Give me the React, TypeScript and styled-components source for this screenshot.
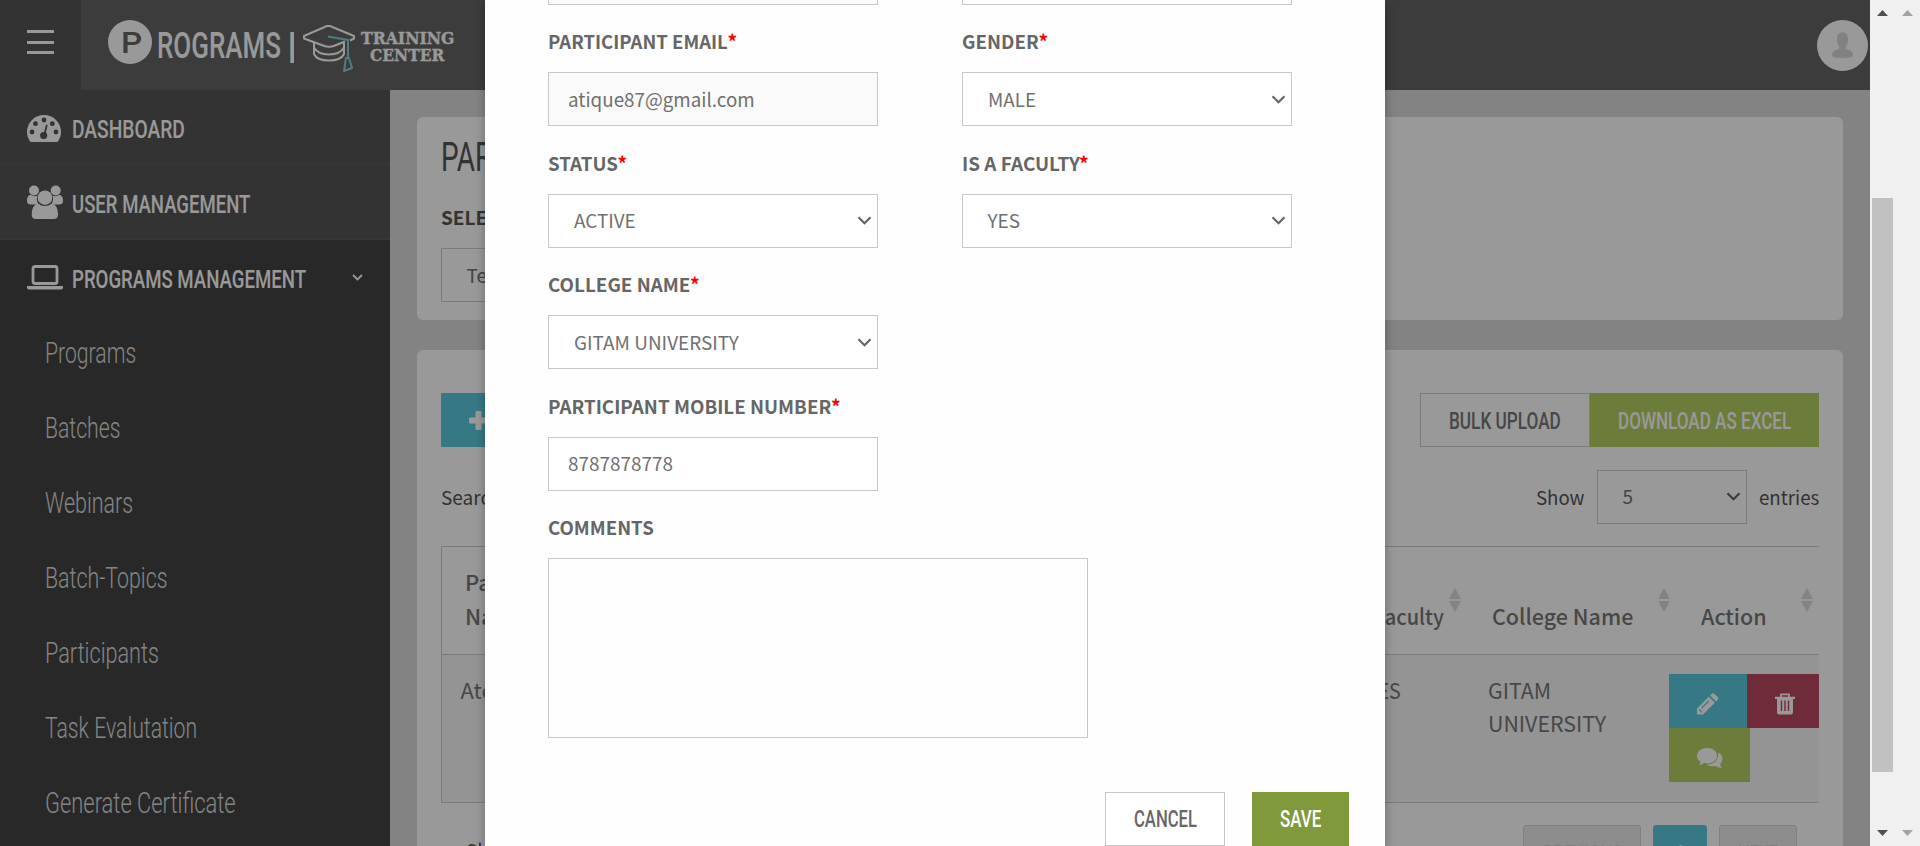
import React, { useLayoutEffect, useRef, useState } from 'react';
import styled, { createGlobalStyle } from 'styled-components';

const sans = `"Noto Sans CJK SC", "Noto Sans", sans-serif`;
const display = `Roboto, "Liberation Sans", sans-serif`;

const Global = createGlobalStyle`
  * { box-sizing: border-box; }
  html, body { margin: 0; height: 846px; overflow: hidden; }
  body { font-family: ${sans}; font-size: 19px; line-height: 27px; color: #555; background: #f1f1f1; }
`;

/* ---------- text fitted to the condensed width of the type design ---------- */
const FitBox = styled.span<{ $w: number }>`
  display: inline-block;
  width: ${p => p.$w}px;
  white-space: nowrap;
  text-align: left;
  flex: none;
`;
const FitInner = styled.span`
  display: inline-block;
  transform-origin: 0 50%;
`;
function Fit({ w, children }: { w: number; children: React.ReactNode }) {
  const ref = useRef<HTMLSpanElement>(null);
  const [scale, setScale] = useState(1);
  useLayoutEffect(() => {
    if (ref.current) setScale(w / ref.current.offsetWidth);
  }, [w]);
  return (
    <FitBox $w={w}>
      <FitInner ref={ref} style={{ transform: `scaleX(${scale})` }}>{children}</FitInner>
    </FitBox>
  );
}

/* ---------- page ---------- */
const Screen = styled.div`
  position: relative;
  width: 1920px;
  height: 846px;
  overflow: hidden;
  display: flex;
`;
const Page = styled.div`
  width: 1870px;
  height: 846px;
  overflow: hidden;
  display: flex;
  flex-direction: column;
  background: #dadadd;
`;
const Header = styled.header`
  height: 90px;
  flex: none;
  display: flex;
  background: #656565;
`;
const MenuButton = styled.div`
  width: 81px;
  background: #555;
  padding: 30px 27px 0;
  display: flex;
  flex-direction: column;
  gap: 7.5px;
`;
const MenuBar = styled.i`
  height: 3px;
  background: #fff;
`;
const Brand = styled.div`
  display: flex;
  align-items: flex-start;
  padding: 20px 0 0 27px;
  color: #fff;
  font-family: ${display};
  flex: 1;
`;
const BrandMark = styled.div`
  width: 44px;
  height: 44px;
  border-radius: 50%;
  background: #fff;
  color: #656565;
  font-size: 30px;
  font-weight: 500;
  line-height: 45px;
  padding-left: 12.5px;
`;
const BrandName = styled.div`
  margin-left: 5px;
  font-size: 36px;
  font-weight: 500;
  line-height: 52px;
`;
const BrandRule = styled.i`
  width: 4px;
  height: 31px;
  margin: 12px 9px 0 9px;
  background: #fff;
  border-left: 1px solid #a5dbe4;
`;
const CapIcon = styled.svg`
  display: block;
  margin-top: 3px;
  flex: none;
`;
const BrandTag = styled.div`
  margin: 10px 0 0 4px;
  width: 94px;
  display: flex;
  flex-direction: column;
  align-items: center;
  font: bold 16.5px/17px "DejaVu Serif", serif;
  -webkit-text-stroke: 0.3px #fff;
`;
const Avatar = styled.div`
  width: 51px;
  height: 51px;
  margin: 20px 2px 0 0;
  border-radius: 50%;
  background: #fff;
`;
const Body = styled.div`
  flex: 1;
  display: flex;
  min-height: 0;
`;
const Sidebar = styled.nav`
  width: 390px;
  flex: none;
  background: #444;
`;
const NavItem = styled.div<{ $open?: boolean }>`
  height: 75px;
  display: flex;
  align-items: center;
  padding: 0 27px;
  background: ${p => (p.$open ? '#444' : '#555')};
  border-bottom: ${p => (p.$open ? '0' : '1px solid #5e5e5e')};
  color: #fff;
`;
const NavText = styled.span<{ $top?: number }>`
  padding-top: ${p => p.$top ?? 4}px;
  font: 500 26.5px/40px ${display};
`;
const NavIcon = styled.span<{ $drop?: number }>`
  width: 45px;
  height: 38px;
  display: flex;
  align-items: center;
  padding-top: ${p => p.$drop ?? 0}px;
`;
const NavCaret = styled.svg`
  margin-left: auto;
`;
const NavChild = styled.div`
  height: 75px;
  padding: 0 0 0 45px;
  color: #ddd;
  font: 300 30px/75px ${display};
`;
const Main = styled.main`
  flex: 1;
  padding: 27px 27px 0;
  display: flex;
  flex-direction: column;
  gap: 30px;
`;
const Card = styled.section<{ $h: number }>`
  height: ${p => p.$h}px;
  flex: none;
  background: #fff;
  border-radius: 6px;
  padding: 0 24px;
`;
const Title = styled.h1`
  margin: 0;
  padding-top: 15px;
  height: 86px;
  font: 400 40.5px/50px ${display};
  color: #555;
`;
const Label = styled.div<{ $dark?: boolean }>`
  font-weight: 700;
  color: ${p => (p.$dark ? '#555' : '#666')};
  display: flex;
`;
const CardLabel = styled(Label)`
  height: 45px;
`;
const Control = styled.div<{ $w: number; $inset?: number; $muted?: boolean; $line?: string }>`
  width: ${p => p.$w}px;
  height: 54px;
  flex: none;
  border: 1px solid ${p => p.$line || '#c8c8c8'};
  background: ${p => (p.$muted ? '#fafafa' : '#fff')};
  display: flex;
  align-items: center;
  padding: 0 5.5px 2px ${p => p.$inset ?? 24.5}px;
  color: #707070;
`;
const SelectArrow = styled.svg`
  margin: 3px 0 0 auto;
  flex: none;
`;
const TopActions = styled.div`
  display: flex;
  padding-top: 43px;
`;
const Button = styled.div<{ $w: number; $bg?: string; $fg?: string; $line?: string }>`
  width: ${p => p.$w}px;
  height: 54px;
  flex: none;
  display: flex;
  align-items: center;
  justify-content: center;
  background: ${p => p.$bg || '#fff'};
  color: ${p => p.$fg || '#fff'};
  border: ${p => (p.$line ? `1px solid ${p.$line}` : '0')};
  padding-top: 1.5px;
  font: 500 23.5px/54px ${display};
`;
const AddButton = styled(Button)`
  justify-content: flex-start;
  padding: 0 0 0 28px;
`;
const IconButton = styled(Button)`
  justify-content: flex-start;
  padding: 5px 0 0 28px;
`;
const Spacer = styled.i`
  flex: 1;
`;
const Filters = styled.div`
  height: 99px;
  display: flex;
  align-items: center;
  gap: 12px;
`;
const Table = styled.div`
  border: 1px solid #cdcdcd;
  border-right: 0;
  height: 257px;
`;
const HeadRow = styled.div`
  height: 108px;
  border-bottom: 1px solid #cdcdcd;
  display: flex;
  align-items: flex-end;
  padding-bottom: 22.5px;
  font-size: 22px;
  line-height: 34px;
  font-weight: 500;
  color: #777;
`;
const HeadCell = styled.div<{ $w: number; $pad: number }>`
  width: ${p => p.$w}px;
  padding-left: ${p => p.$pad}px;
  display: flex;
  align-items: flex-end;
`;
const SortIcon = styled.svg`
  margin: 0 6px 20px auto;
`;
const DataRow = styled.div`
  height: 147px;
  background: #f7f7f7;
  display: flex;
  padding-top: 19px;
  font-size: 22px;
  line-height: 33px;
  color: #777;
`;
const DataCell = styled.div<{ $w: number; $pad: number }>`
  width: ${p => p.$w}px;
  padding: 0 0 0 ${p => p.$pad}px;
  margin-top: -1px;
`;
const RowActions = styled.div`
  width: 150px;
  display: flex;
  flex-wrap: wrap;
  align-content: flex-start;
`;
const Pager = styled.div`
  display: flex;
  padding: 22px 22px 0 25px;
  gap: 12px;
  line-height: 49px;
`;
const PageButton = styled.div<{ $w: number; $active?: boolean }>`
  width: ${p => p.$w}px;
  height: 60px;
  flex: none;
  border-radius: 3px;
  border: 1px solid ${p => (p.$active ? '#5acadc' : '#d6d6d6')};
  background: ${p => (p.$active ? '#5acadc' : '#ebebeb')};
  color: ${p => (p.$active ? '#fff' : '#d0d0d0')};
  text-align: center;
  font: 400 22px/56px ${display};
`;

/* ---------- modal ---------- */
const Backdrop = styled.div`
  position: absolute;
  inset: 0 50px 0 0;
  background: rgba(0, 0, 0, 0.4);
`;
const Modal = styled.div`
  position: absolute;
  left: 485px;
  top: 0;
  width: 900px;
  height: 846px;
  overflow: hidden;
  background: #fefefe;
  box-shadow: 0 4px 10px rgba(0, 0, 0, 0.3);
`;
const Form = styled.div`
  margin-top: -49.5px;
  padding: 0 63px;
`;
const Row = styled.div`
  display: flex;
  gap: 84px;
`;
const Field = styled.div`
  width: 330px;
`;
const FieldLabel = styled(Label)`
  height: 67.5px;
  padding-top: 22.5px;
`;
const Star = styled.span`
  margin-left: -0.5px;
  color: #f00;
`;
const TextArea = styled.div`
  width: 540px;
  height: 180px;
  border: 1px solid #c8c8c8;
`;
const Footer = styled.div`
  display: flex;
  justify-content: flex-end;
  gap: 27px;
  padding: 53.5px 36px 0 0;
`;

/* ---------- scrollbars ---------- */
const ScrollTrack = styled.div`
  width: 25px;
  height: 846px;
  background: #f0f0f0;
  display: flex;
  flex-direction: column;
  align-items: center;
  padding: 10px 0;
`;
const Thumb = styled.div`
  width: 21px;
  height: 574px;
  margin-top: 182px;
  background: #c1c1c1;
`;
const ScrollArrow = styled.svg`
  flex: none;
`;

const Chevron = () => (
  <SelectArrow width="15" height="12" viewBox="0 0 15 12">
    <path d="M1.5 2.2 L7.5 8.2 L13.5 2.2" fill="none" stroke="#666" strokeWidth="2.2" />
  </SelectArrow>
);
const Sort = () => (
  <SortIcon width="12" height="24" viewBox="0 0 12 24">
    <path d="M0 11 L6 0 L12 11Z M0 13 L6 24 L12 13Z" fill="#dadada" />
  </SortIcon>
);
const ScrollUp = ({ color }: { color: string }) => (
  <ScrollArrow width="11" height="6" viewBox="0 0 11 6"><path d="M0 6 L5.5 0 L11 6Z" fill={color} /></ScrollArrow>
);
const ScrollDown = ({ color }: { color: string }) => (
  <ScrollArrow width="11" height="6" viewBox="0 0 11 6"><path d="M0 0 L5.5 6 L11 0Z" fill={color} /></ScrollArrow>
);
const PlusIcon = () => (
  <svg width="19" height="19" viewBox="0 0 19 19" fill="#fff">
    <rect x="0" y="6.500" width="19" height="6" rx="1.200" /><rect x="6.500" y="0" width="6" height="19" rx="1.200" />
  </svg>
);
const GaugeIcon = () => (
  <svg width="34" height="27" viewBox="0 0 34 27">
    <path d="M3.500 27 Q0 22.500 0 17 A17 17 0 0 1 34 17 Q34 22.500 30.500 27Z" fill="#fff" />
    <g fill="#555">
      <circle cx="5" cy="17" r="2.400" /><circle cx="8.500" cy="8.700" r="2.400" /><circle cx="17" cy="5" r="2.400" />
      <circle cx="25.300" cy="8.700" r="2.400" /><circle cx="29" cy="17" r="2.400" /><circle cx="16.700" cy="20.500" r="3.600" />
    </g>
    <path d="M17.500 19 L19.700 10.500" stroke="#555" strokeWidth="1.800" strokeLinecap="round" />
  </svg>
);
const UsersIcon = () => (
  <svg width="36" height="35" viewBox="0 0 36 35" fill="#fff">
    <circle cx="7" cy="5.5" r="5" /><circle cx="28.7" cy="5.5" r="5" />
    <path d="M0 16 C0 11 2 10 4 10 Q7 12 10.500 10.500 Q9 15 11.500 19.500 H4 Q0 19.500 0 16Z" />
    <path d="M36 16 C36 11 34 10 32 10 Q29 12 25.500 10.500 Q27 15 24.500 19.500 H32 Q36 19.500 36 16Z" />
    <circle cx="18" cy="12.700" r="7.300" />
    <path d="M11 18.500 Q18 23.500 25 18.500 Q31 20 31 29.500 Q31 34 26.500 34 H9 Q4.700 34 4.700 29.500 Q4.700 20 11 18.500Z" />
  </svg>
);
const LaptopIcon = () => (
  <svg width="36" height="25" viewBox="0 0 36 25">
    <rect x="6" y="1.500" width="24" height="17" rx="2" fill="none" stroke="#fff" strokeWidth="2.800" />
    <path d="M0 21 H36 V22.500 Q36 24.500 33 24.500 H3 Q0 24.500 0 22.500Z" fill="#fff" />
  </svg>
);
const PencilIcon = () => (
  <svg width="22" height="22" viewBox="0 0 22 22">
    <path d="M0 21.500 V15.500 L11.800 3.700 L17.800 9.700 L6 21.500Z M13 2.500 L14.800 .700 Q16 -.300 17.200 .700 L20.800 4.300 Q21.800 5.500 20.800 6.700 L19 8.500Z" fill="#fff" />
    <path d="M2.200 16.500 L5 19.300 M4.700 15 L12 7.700" stroke="#5acadc" strokeWidth="1.200" />
  </svg>
);
const TrashIcon = () => (
  <svg width="20" height="22" viewBox="0 0 20 22">
    <path d="M6 4 V1.300 H14 V4" fill="none" stroke="#fff" strokeWidth="1.700" />
    <path d="M0 3.800 H20 V6 H18 V19 Q18 21.500 15.500 21.500 H4.500 Q2 21.500 2 19 V6 H0Z" fill="#fff" />
    <path d="M6.500 7.500 V18 M10 7.500 V18 M13.500 7.500 V18" stroke="#bb4962" strokeWidth="1.400" />
  </svg>
);
const CommentsIcon = () => (
  <svg width="26" height="20" viewBox="0 0 26 20" fill="#fff">
    <path d="M10 0 C16 0 20 3.400 20 7.700 C20 12 16 15.400 10 15.400 Q8.500 15.400 7.200 15.100 Q4.800 17 1.800 17 Q3.600 15.500 3.600 13.700 Q0 11.500 0 7.700 C0 3.400 4.500 0 10 0Z" />
    <path d="M21.300 4.500 Q25.500 6.800 25.500 11 Q25.500 14 23 16 Q23.200 18.300 25 19.700 Q21 20 18.700 17.900 Q13.500 18.900 9.500 16.700 Q21.800 16 21.300 4.500Z" />
  </svg>
);

const children: [string, number][] = [
  ['Programs', 91], ['Batches', 75.5], ['Webinars', 88], ['Batch-Topics', 122.5],
  ['Participants', 114], ['Task Evalutation', 152], ['Generate Certificate', 190.5],
];

function FormField({ label, w, value, vw, select, muted }: {
  label: string; w: number; value: string; vw: number; select?: boolean; muted?: boolean;
}) {
  return (
    <Field>
      <FieldLabel><Fit w={w}>{label}</Fit><Star>*</Star></FieldLabel>
      <Control $w={330} $inset={select ? 24.5 : 18.5} $muted={muted}>
        <Fit w={vw}>{value}</Fit>
        {select && <Chevron />}
      </Control>
    </Field>
  );
}

export default function App() {
  return (
    <Screen>
      <Global />
      <Page>
        <Header>
          <MenuButton><MenuBar /><MenuBar /><MenuBar /></MenuButton>
          <Brand>
            <BrandMark><Fit w={21}>P</Fit></BrandMark>
            <BrandName><Fit w={124}>ROGRAMS</Fit></BrandName>
            <BrandRule />
            <CapIcon width="53" height="51" viewBox="0 0 53 51" fill="none" stroke="#fff" strokeWidth="2" strokeLinejoin="round">
              <path d="M47 17.500 L51 15.500 V13 L27 3 H24 L1 13 V15.500 L20 22.500 Q26 25 32 22.500 L42 18.500" />
              <path d="M11 19.500 V31 Q14 37.500 26 37.500 Q38 37.500 41 31 V20 M11 24.500 Q15 31.500 26 31.500 Q37 31.500 41 24.500" />
              <path d="M25 13.500 L45 17 V34 M43 35 L41 48 L49 45 L46 35Z" stroke="#82d0da" />
            </CapIcon>
            <BrandTag><Fit w={93}>TRAINING</Fit><Fit w={74}>CENTER</Fit></BrandTag>
          </Brand>
          <Avatar>
            <svg width="51" height="51" viewBox="0 0 51 51" fill="#d8d8d8">
              <path d="M25.500 12.500 C29.500 12.500 31 15 31 19.500 C31 24 29 26 28.500 28 Q29 29.500 32 30 Q36 31 36 35.500 Q36 38 25.500 38 Q15 38 15 35.500 Q15 31 19 30 Q22 29.500 22.500 28 C22 26 20 24 20 19.500 C20 15 21.500 12.500 25.500 12.500Z" />
            </svg>
          </Avatar>
        </Header>
        <Body>
          <Sidebar>
            <NavItem><NavIcon $drop={3}><GaugeIcon /></NavIcon><NavText><Fit w={113}>DASHBOARD</Fit></NavText></NavItem>
            <NavItem><NavIcon><UsersIcon /></NavIcon><NavText><Fit w={178.5}>USER MANAGEMENT</Fit></NavText></NavItem>
            <NavItem $open>
              <NavIcon><LaptopIcon /></NavIcon><NavText $top={3}><Fit w={234}>PROGRAMS MANAGEMENT</Fit></NavText>
              <NavCaret width="11" height="8" viewBox="0 0 11 8"><path d="M1 1 L5.500 5.500 L10 1" fill="none" stroke="#fff" strokeWidth="1.800" /></NavCaret>
            </NavItem>
            {children.map(([name, w]) => <NavChild key={name}><Fit w={w}>{name}</Fit></NavChild>)}
          </Sidebar>
          <Main>
            <Card $h={203}>
              <Title><Fit w={187}>PARTICIPANTS</Fit></Title>
              <CardLabel $dark>SELECT PROGRAM</CardLabel>
              <Control $w={330} $line="#cdcdcd">Test Program</Control>
            </Card>
            <Card $h={560}>
              <TopActions>
                <AddButton $w={180} $bg="#5acadc"><PlusIcon /></AddButton>
                <Spacer />
                <Button $w={170} $fg="#777" $line="#cdcdcd"><Fit w={112}>BULK UPLOAD</Fit></Button>
                <Button $w={229} $bg="#b4cf61"><Fit w={173}>DOWNLOAD AS EXCEL</Fit></Button>
              </TopActions>
              <Filters>
                <span>Search</span>
                <Spacer />
                <Fit w={49}>Show</Fit>
                <Control $w={150} $line="#cdcdcd">5<Chevron /></Control>
                <Fit w={60}>entries</Fit>
              </Filters>
              <Table>
                <HeadRow>
                  <HeadCell $w={898} $pad={23}>Participant<br />Name</HeadCell>
                  <HeadCell $w={127} $pad={14}><Fit w={90}>Is Faculty</Fit><Sort /></HeadCell>
                  <HeadCell $w={209} $pad={25}><Fit w={141.5}>College Name</Fit><Sort /></HeadCell>
                  <HeadCell $w={143} $pad={24.5}><Fit w={65.5}>Action</Fit><Sort /></HeadCell>
                </HeadRow>
                <DataRow>
                  <DataCell $w={919} $pad={18.5}>Ateeque</DataCell>
                  <DataCell $w={127} $pad={6}><Fit w={34}>YES</Fit></DataCell>
                  <DataCell $w={181} $pad={0}><Fit w={63}>GITAM</Fit><br /><Fit w={118.5}>UNIVERSITY</Fit></DataCell>
                  <RowActions>
                    <IconButton $w={78} $bg="#5acadc"><PencilIcon /></IconButton>
                    <IconButton $w={72} $bg="#bb4962"><TrashIcon /></IconButton>
                    <IconButton $w={81} $bg="#b4cf61"><CommentsIcon /></IconButton>
                  </RowActions>
                </DataRow>
              </Table>
              <Pager>
                <span>Showing 1 to 1 of 1 entries</span>
                <Spacer />
                <PageButton $w={118}><Fit w={79}>PREVIOUS</Fit></PageButton>
                <PageButton $w={54} $active>1</PageButton>
                <PageButton $w={78}><Fit w={40}>NEXT</Fit></PageButton>
              </Pager>
            </Card>
          </Main>
        </Body>
      </Page>
      <ScrollTrack><ScrollUp color="#505050" /><Thumb /><Spacer /><ScrollDown color="#505050" /></ScrollTrack>
      <ScrollTrack><ScrollUp color="#a3a3a3" /><Spacer /><ScrollDown color="#a3a3a3" /></ScrollTrack>
      <Backdrop />
      <Modal>
        <Form>
          <Row><Control $w={330} $muted /><Control $w={330} /></Row>
          <Row>
            <FormField label="PARTICIPANT EMAIL" w={180} value="atique87@gmail.com" vw={187} muted />
            <FormField label="GENDER" w={77} value="MALE" vw={48.5} select />
          </Row>
          <Row>
            <FormField label="STATUS" w={70} value="ACTIVE" vw={61.5} select />
            <FormField label="IS A FACULTY" w={117.5} value="YES" vw={33} select />
          </Row>
          <FormField label="COLLEGE NAME" w={142.5} value="GITAM UNIVERSITY" vw={164.5} select />
          <FormField label="PARTICIPANT MOBILE NUMBER" w={283.5} value="8787878778" vw={104.5} />
          <FieldLabel><Fit w={106}>COMMENTS</Fit></FieldLabel>
          <TextArea />
        </Form>
        <Footer>
          <Button $w={120} $fg="#666" $line="#c8c8c8"><Fit w={63}>CANCEL</Fit></Button>
          <Button $w={97} $bg="#80993a"><Fit w={41}>SAVE</Fit></Button>
        </Footer>
      </Modal>
    </Screen>
  );
}
